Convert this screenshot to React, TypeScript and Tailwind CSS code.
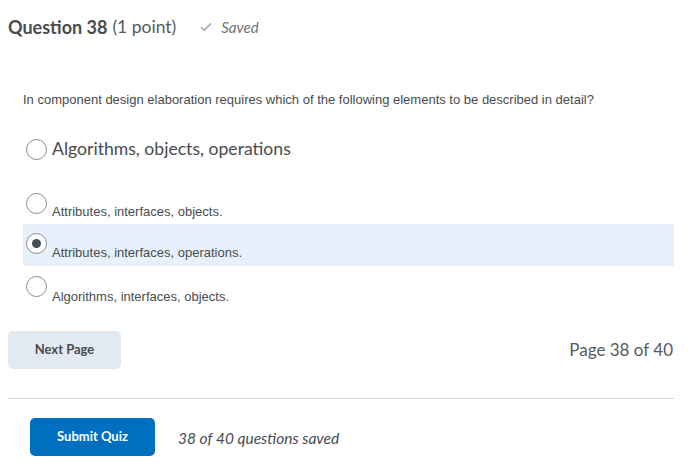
import React from "react";

function Radio({ checked }: { checked?: boolean }) {
  return (
    <span className="flex h-[21px] w-[21px] shrink-0 items-center justify-center rounded-full border border-[#868c8f] bg-white">
      {checked && <span className="h-[9px] w-[9px] rounded-full bg-[#494c4e]" />}
    </span>
  );
}

export default function App() {
  return (
    <div className="w-[694px] h-[470px] bg-white text-[#494c4e] overflow-hidden">
      <div className="flex h-[54px] items-center pl-[8px] font-['Lato',sans-serif]">
        <span className="text-[18px] font-bold text-[#494c4e]">Question 38</span>
        <span className="ml-[5px] text-[17.5px] text-[#565a5c]">(1 point)</span>
        <svg className="ml-[24px]" width="12" height="10" viewBox="0 0 12 10">
          <path d="M1 5.2 L4.3 8.4 L11 1.4" fill="none" stroke="#a6abae" strokeWidth="1.6" />
        </svg>
        <span className="ml-[9px] text-[15px] italic text-[#6e7376]">Saved</span>
      </div>

      <p className="mt-[38px] pl-[23px] text-[13px] leading-[16px] text-[#494c4e] font-['Liberation_Sans',Arial,sans-serif]">
        In component design elaboration requires which of the following elements to be described in detail?
      </p>

      <div className="ml-[23px] mr-[20px] mt-[20px]">
        <div className="flex h-[42px] items-center gap-[5px] pl-[3px]">
          <Radio />
          <span className="text-[17.6px] text-[#494c4e] font-['Lato',sans-serif]">Algorithms, objects, operations</span>
        </div>
        <div className="mt-[23px] flex h-[31px] items-start pl-[3px] font-['Liberation_Sans',Arial,sans-serif]">
          <Radio />
          <span className="ml-[5px] mt-[11px] text-[13px] leading-[15px] text-[#494c4e]">Attributes, interfaces, objects.</span>
        </div>
        <div className="flex h-[42px] items-start bg-[#e8f1fb] pl-[3px] pt-[9px] font-['Liberation_Sans',Arial,sans-serif]">
          <Radio checked />
          <span className="ml-[5px] mt-[12px] text-[13px] leading-[15px] text-[#494c4e]">Attributes, interfaces, operations.</span>
        </div>
        <div className="flex h-[42px] items-start pl-[3px] pt-[10px] font-['Liberation_Sans',Arial,sans-serif]">
          <Radio />
          <span className="ml-[5px] mt-[13px] text-[13px] leading-[15px] text-[#494c4e]">Algorithms, interfaces, objects.</span>
        </div>
      </div>

      <div className="mt-[23px] flex items-center justify-between pl-[8px] pr-[21px] font-['Lato',sans-serif]">
        <button className="h-[38px] w-[113px] rounded-[5px] bg-[#e3e9f1] text-[13px] font-bold text-[#494c4e]">
          Next Page
        </button>
        <span className="text-[17px] text-[#565a5c]">Page 38 of 40</span>
      </div>

      <div className="ml-[8px] mr-[20px] mt-[29px] h-px bg-[#cdd5dc]" />

      <div className="mt-[19px] flex items-center pl-[30px] font-['Lato',sans-serif]">
        <button className="h-[38px] w-[125px] rounded-[5px] bg-[#006fbf] text-[13px] font-bold text-white">
          Submit Quiz
        </button>
        <span className="ml-[23px] mt-[4px] text-[15.5px] italic text-[#494c4e]">38 of 40 questions saved</span>
      </div>
    </div>
  );
}
